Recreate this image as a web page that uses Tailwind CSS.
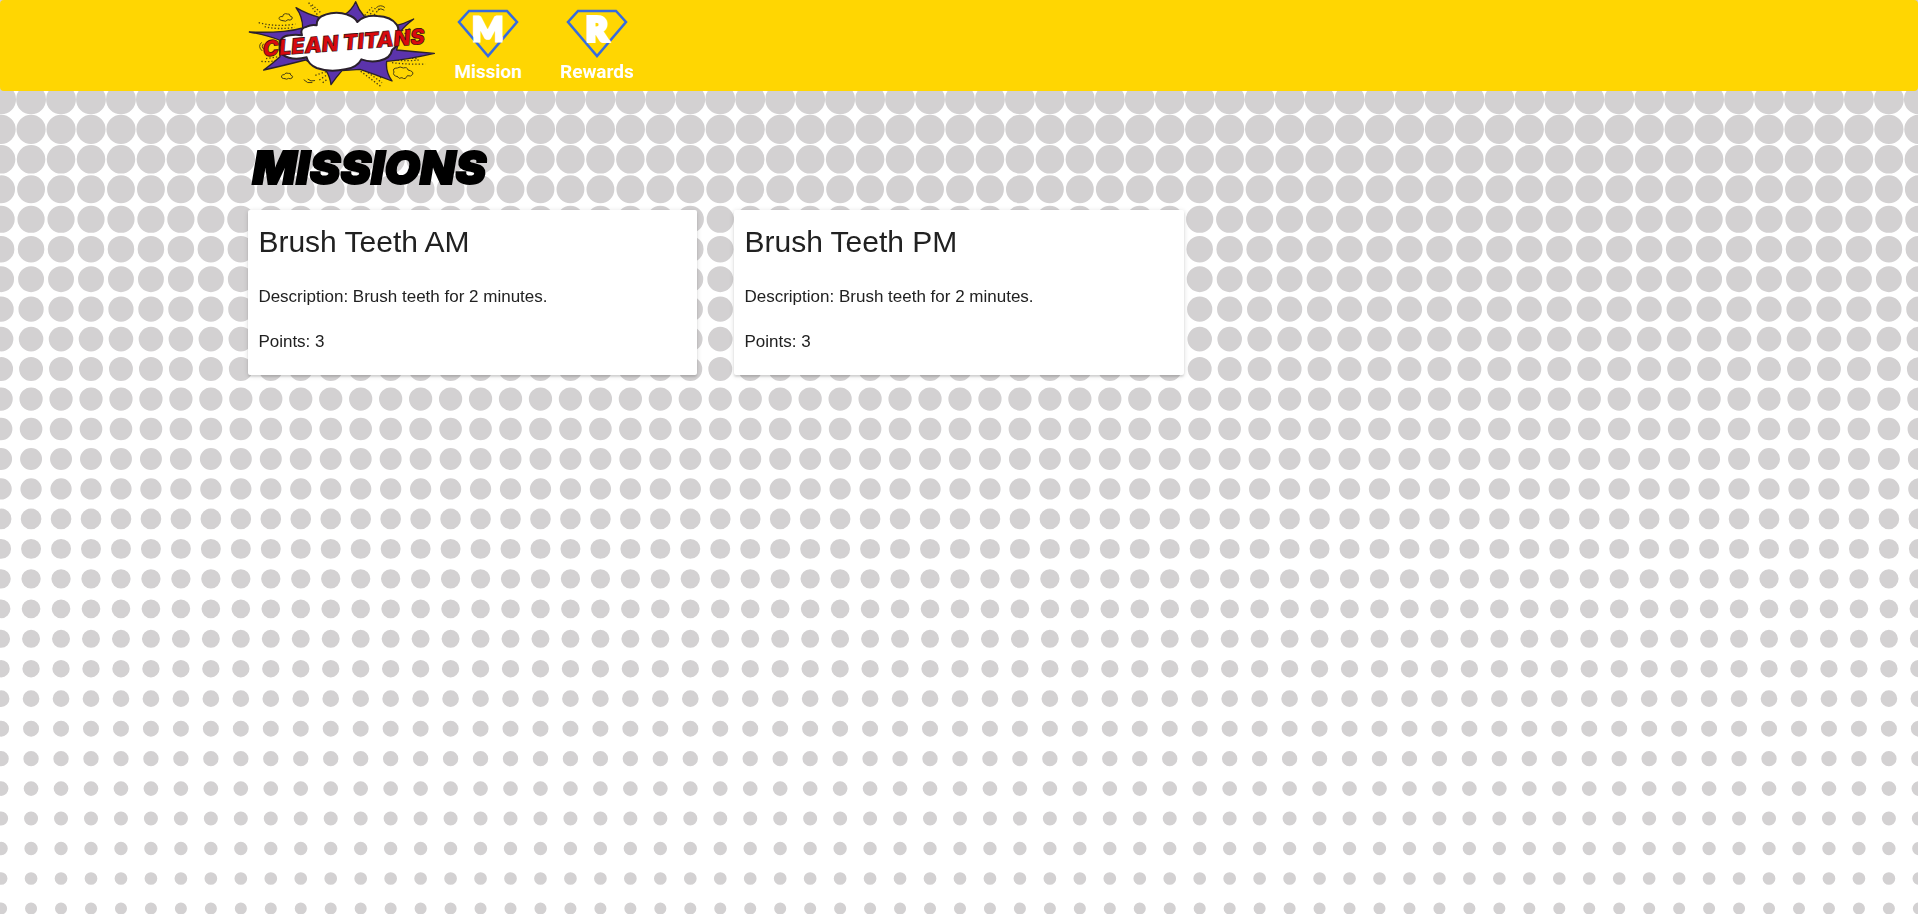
<!DOCTYPE html>
<html lang="en">
<head>
<meta charset="utf-8">
<title>Clean Titans - Missions</title>
<script src="https://cdn.jsdelivr.net/npm/@tailwindcss/browser@4"></script>
</head>
<body class="relative min-h-screen bg-white font-['Liberation_Sans',Arial,sans-serif] text-[#212121]">
<!-- Halftone backdrop: each row is one round-capped dashed line -->
<svg id="dots" class="fixed inset-0 -z-10 h-full w-full" aria-hidden="true" fill="none" stroke="#d3d1d2" stroke-linecap="round"></svg>

<header class="rounded bg-[#ffd602]">
  <nav class="mx-auto flex w-[74.1%] items-center">
    <a href="#" aria-label="Clean Titans" class="block">
      <svg class="block h-[91px] w-[190px]" viewBox="38 0 570 273">
        <g fill="none" stroke="#4a3f14" stroke-width="4" stroke-dasharray="4 6">
          <path d="M70 68Q125 82 180 72M88 80Q130 90 178 82M220 8L246 44M230 14L256 38M392 58L424 20M404 60L432 26M388 46L410 22M78 184Q110 188 136 176M92 176L130 170"/>
          <path d="M470 188Q520 194 570 192M476 180Q520 184 550 180M500 172L545 176M376 214L440 262M390 212L440 248M410 214L440 236M240 226L274 214M252 240L276 224M262 248L278 236M500 92L524 86M498 104L520 96"/>
        </g>
        <g fill="none" stroke="#4a3f14" stroke-width="3" stroke-linecap="round">
          <path d="M78 128Q66 140 80 152M84 132Q76 140 86 148M424 22Q436 12 448 22M428 30Q436 22 446 30M206 240Q216 252 230 248M218 238Q226 246 238 242M562 112Q570 118 562 126"/>
          <path d="M142 62q-14-2-10-10q4-4 10-2q2-12 14-8q8-2 8 6q10 2 6 9q-6 6-12 2q-6 8-16 3zM148 236q-12 0-9-9q3-4 8-3q3-8 12-4q8-2 7 5q10 4 4 9q-6 4-10 1q-6 5-12 1zM486 230q-16-4-10-14q-6-12 10-12q8-6 18 0q12-4 14 6q18 4 14 13q-4 8-16 4q-6 14-16 6q-10 6-14-3z"/>
        </g>
        <path fill="#5b33ac" stroke="#2a202c" stroke-width="4" stroke-linejoin="round" d="M42 96Q100 98 146 94Q174 92 202 84Q202 50 182 23Q214 42 252 52L325 46Q350 30 361 5Q370 30 386 48L478 78Q505 72 535 57Q508 78 496 94L484 150Q540 156 597 160Q520 178 454 184Q450 214 470 243Q416 222 374 208L320 212Q304 230 287 254Q284 230 272 212L210 180Q140 198 85 210Q110 192 134 170L132 120Q96 106 42 96Z"/>
        <path fill="#fff" stroke="#2a202c" stroke-width="6" stroke-linejoin="round" d="M214 172Q170 184 142 164Q126 148 136 132Q134 108 164 106Q180 102 200 106Q192 84 214 80Q230 72 244 76Q242 52 270 44Q304 32 336 44Q358 50 366 66Q388 44 426 48Q468 50 484 74Q494 88 484 102Q500 128 470 150Q466 176 432 182Q404 188 378 178Q366 202 330 208Q282 218 244 204Q218 192 214 172Z"/>
        <text transform="rotate(-4.5 320 140)" x="326" y="151" text-anchor="middle" font-family="Inter, sans-serif" font-size="65" font-weight="900" font-style="italic" fill="#d90a0e" stroke="#2c0c10" stroke-width="2">CLEAN TITANS</text>
      </svg>
    </a>
    <div class="ml-4 flex gap-[38px] font-['Roboto',sans-serif] text-[19px] leading-6 font-bold text-white">
      <a href="#" class="flex flex-col items-center">
        <svg class="block h-[53px] w-[62px]" viewBox="0 -3 62 53" aria-hidden="true">
          <path d="M12 1H50L60 12L31 46L2 12Z" fill="none" stroke="#366bdf" stroke-width="2.5"/>
          <text x="31" y="31" text-anchor="middle" font-family="Lato, sans-serif" font-size="33" font-weight="900" fill="#fff" stroke="#fff" stroke-width="3">M</text>
        </svg>
        Mission
      </a>
      <a href="#" class="flex flex-col items-center">
        <svg class="block h-[53px] w-[62px]" viewBox="0 -3 62 53" aria-hidden="true">
          <path d="M12 1H50L60 12L31 46L2 12Z" fill="none" stroke="#366bdf" stroke-width="2.5"/>
          <text x="31" y="31" text-anchor="middle" font-family="Lato, sans-serif" font-size="33" font-weight="900" fill="#fff" stroke="#fff" stroke-width="4">R</text>
        </svg>
        Rewards
      </a>
    </div>
  </nav>
</header>

<main class="mx-auto w-[74.1%] pt-12">
  <h1 class="mb-[15px] pl-1 font-['Inter',sans-serif] text-[46px] leading-14 font-black text-black italic [-webkit-text-stroke:2px_black]">MISSIONS</h1>
  <div class="grid grid-cols-3 gap-[37px]">
    <section class="rounded-xs bg-white px-[10px] pt-[14px] pb-[21px] shadow-[0_2px_2px_rgba(0,0,0,0.1),0_1px_5px_rgba(0,0,0,0.15)]">
      <h2 class="mb-[25px] text-3xl leading-9">Brush Teeth AM</h2>
      <p class="mb-[21px] text-[17px] leading-6">Description: Brush teeth for 2 minutes.</p>
      <p class="text-[17px] leading-6">Points: 3</p>
    </section>
    <section class="rounded-xs bg-white px-[10px] pt-[14px] pb-[21px] shadow-[0_2px_2px_rgba(0,0,0,0.1),0_1px_5px_rgba(0,0,0,0.15)]">
      <h2 class="mb-[25px] text-3xl leading-9">Brush Teeth PM</h2>
      <p class="mb-[21px] text-[17px] leading-6">Description: Brush teeth for 2 minutes.</p>
      <p class="text-[17px] leading-6">Points: 3</p>
    </section>
  </div>
</main>
<script>
  // Dot radius shrinks steadily from the top of the page to the bottom.
  const pitch = 29.965;
  const svg = document.getElementById('dots');
  for (let i = 0; i < 45; i++) {
    const y = 9.5 + i * pitch;
    const r = 14.6 - (y - 129.3) * 0.011;
    if (r <= 0) break;
    const line = document.createElementNS('http://www.w3.org/2000/svg', 'path');
    line.setAttribute('d', `M1.1 ${y}H5000`);
    line.setAttribute('stroke-width', 2 * r);
    line.setAttribute('stroke-dasharray', `0 ${pitch}`);
    svg.appendChild(line);
  }
</script>
</body>
</html>
